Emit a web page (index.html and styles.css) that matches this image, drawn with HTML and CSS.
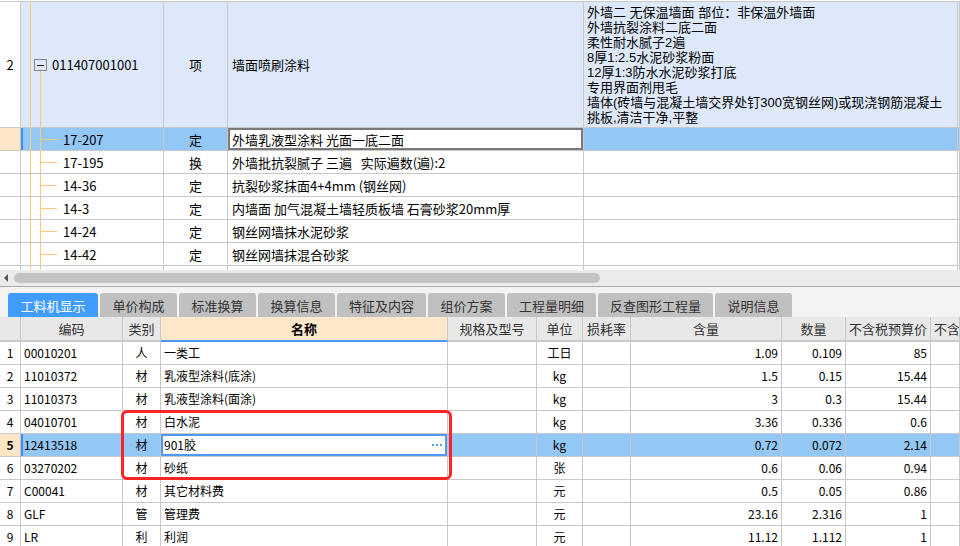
FILE: index.html
```html
<!DOCTYPE html>
<html lang="zh-CN">
<head>
<meta charset="utf-8">
<title>工料机显示</title>
<link rel="stylesheet" href="styles.css">
</head>
<body>
<div class="app">
  <div class="top">
    <div class="trow item">
      <div class="num">2</div>
      <div class="code root"><span class="minus"></span>011407001001</div>
      <div class="type">项</div>
      <div class="name">墙面喷刷涂料</div>
      <div class="desc">
        <div class="dl">外墙二 无保温墙面 部位：非保温外墙面</div>
        <div class="dl">外墙抗裂涂料二底二面</div>
        <div class="dl">柔性耐水腻子2遍</div>
        <div class="dl">8厚1:2.5水泥砂浆粉面</div>
        <div class="dl">12厚1:3防水水泥砂浆打底</div>
        <div class="dl">专用界面剂甩毛</div>
        <div class="dl">墙体(砖墙与混凝土墙交界处钉300宽钢丝网)或现浇钢筋混凝土</div>
        <div class="dl">挑板,清洁干净,平整</div>
      </div>
      <div class="end"></div>
    </div>
    <div class="trow sel">
      <div class="num"></div>
      <div class="code child">17-207</div>
      <div class="type">定</div>
      <div class="name">外墙乳液型涂料 光面一底二面</div>
      <div class="desc"></div>
      <div class="end"></div>
    </div>
    <div class="trow">
      <div class="num"></div>
      <div class="code child">17-195</div>
      <div class="type">换</div>
      <div class="name">外墙批抗裂腻子 三遍&nbsp;&nbsp;&nbsp;实际遍数(遍):2</div>
      <div class="desc"></div>
      <div class="end"></div>
    </div>
    <div class="trow">
      <div class="num"></div>
      <div class="code child">14-36</div>
      <div class="type">定</div>
      <div class="name">抗裂砂浆抹面4+4mm (钢丝网)</div>
      <div class="desc"></div>
      <div class="end"></div>
    </div>
    <div class="trow">
      <div class="num"></div>
      <div class="code child">14-3</div>
      <div class="type">定</div>
      <div class="name">内墙面 加气混凝土墙轻质板墙 石膏砂浆20mm厚</div>
      <div class="desc"></div>
      <div class="end"></div>
    </div>
    <div class="trow">
      <div class="num"></div>
      <div class="code child">14-24</div>
      <div class="type">定</div>
      <div class="name">钢丝网墙抹水泥砂浆</div>
      <div class="desc"></div>
      <div class="end"></div>
    </div>
    <div class="trow">
      <div class="num"></div>
      <div class="code child">14-42</div>
      <div class="type">定</div>
      <div class="name">钢丝网墙抹混合砂浆</div>
      <div class="desc"></div>
      <div class="end"></div>
    </div>
    <div class="trow">
      <div class="num"></div>
      <div class="code cont"></div>
      <div class="type"></div>
      <div class="name"></div>
      <div class="desc"></div>
      <div class="end"></div>
    </div>
  </div>

  <div class="hscroll"><span class="arrow"></span><span class="thumb"></span></div>

  <div class="tabs">
    <div class="tab active">工料机显示</div>
    <div class="tab">单价构成</div>
    <div class="tab">标准换算</div>
    <div class="tab">换算信息</div>
    <div class="tab">特征及内容</div>
    <div class="tab">组价方案</div>
    <div class="tab">工程量明细</div>
    <div class="tab">反查图形工程量</div>
    <div class="tab">说明信息</div>
  </div>

  <div class="bottom">
    <div class="brow head">
      <div></div>
      <div>编码</div>
      <div>类别</div>
      <div class="hname">名称</div>
      <div>规格及型号</div>
      <div>单位</div>
      <div>损耗率</div>
      <div>含量</div>
      <div>数量</div>
      <div>不含税预算价</div>
      <div class="clip">不含</div>
    </div>
    <div class="brow">
      <div class="bn">1</div><div class="bc">00010201</div><div class="bt">人</div><div class="bm">一类工</div><div></div><div class="bu">工日</div><div></div><div class="r">1.09</div><div class="r">0.109</div><div class="r">85</div><div></div>
    </div>
    <div class="brow">
      <div class="bn">2</div><div class="bc">11010372</div><div class="bt">材</div><div class="bm">乳液型涂料(底涂)</div><div></div><div class="bu">kg</div><div></div><div class="r">1.5</div><div class="r">0.15</div><div class="r">15.44</div><div></div>
    </div>
    <div class="brow">
      <div class="bn">3</div><div class="bc">11010373</div><div class="bt">材</div><div class="bm">乳液型涂料(面涂)</div><div></div><div class="bu">kg</div><div></div><div class="r">3</div><div class="r">0.3</div><div class="r">15.44</div><div></div>
    </div>
    <div class="brow">
      <div class="bn">4</div><div class="bc">04010701</div><div class="bt">材</div><div class="bm">白水泥</div><div></div><div class="bu">kg</div><div></div><div class="r">3.36</div><div class="r">0.336</div><div class="r">0.6</div><div></div>
    </div>
    <div class="brow bsel">
      <div class="bn">5</div><div class="bc">12413518</div><div class="bt">材</div><div class="bm edit">901胶<span class="more"><i></i><i></i><i></i></span></div><div></div><div class="bu">kg</div><div></div><div class="r">0.72</div><div class="r">0.072</div><div class="r">2.14</div><div></div>
    </div>
    <div class="brow">
      <div class="bn">6</div><div class="bc">03270202</div><div class="bt">材</div><div class="bm">砂纸</div><div></div><div class="bu">张</div><div></div><div class="r">0.6</div><div class="r">0.06</div><div class="r">0.94</div><div></div>
    </div>
    <div class="brow">
      <div class="bn">7</div><div class="bc">C00041</div><div class="bt">材</div><div class="bm">其它材料费</div><div></div><div class="bu">元</div><div></div><div class="r">0.5</div><div class="r">0.05</div><div class="r">0.86</div><div></div>
    </div>
    <div class="brow">
      <div class="bn">8</div><div class="bc">GLF</div><div class="bt">管</div><div class="bm">管理费</div><div></div><div class="bu">元</div><div></div><div class="r">23.16</div><div class="r">2.316</div><div class="r">1</div><div></div>
    </div>
    <div class="brow">
      <div class="bn">9</div><div class="bc">LR</div><div class="bt">利</div><div class="bm">利润</div><div></div><div class="bu">元</div><div></div><div class="r">11.12</div><div class="r">1.112</div><div class="r">1</div><div></div>
    </div>
    <div class="mark"></div>
  </div>
</div>
</body>
</html>
```

FILE: styles.css
```css
* { box-sizing: border-box; }
html, body { margin: 0; padding: 0; }
body {
  width: 960px;
  height: 546px;
  overflow: hidden;
  background: #fff;
  font-family: "Noto Sans CJK SC", "Liberation Sans", sans-serif;
  color: #000;
}
.app { width: 960px; height: 546px; overflow: hidden; }

/* ---------- top tree grid ---------- */
.top {
  height: 270px;
  overflow: hidden;
  padding-top: 1px;
  background: #fff;
}
.trow {
  display: grid;
  grid-template-columns: 21px 143px 64px 356px 374px 1fr;
  height: 23px;
  font-size: 13px;
}
.trow > div {
  border-right: 1px solid #c8c8c8;
  border-bottom: 1px solid #c8c8c8;
  display: flex;
  align-items: center;
  white-space: nowrap;
  overflow: hidden;
  line-height: 15px;
}
.trow .num { justify-content: center; }
.trow .type { justify-content: center; }
.trow .name { padding-left: 4px; }
.trow.item {
  height: 127px;
  border-top: 1px solid #c8c8c8;
}
.trow.item > div { background-color: #dde9fb; }
.trow.item > .num { background-color: #fff; }
.trow.item .desc {
  flex-direction: column;
  align-items: flex-start;
  padding: 3px 0 0 3px;
}
.dl {
  height: 15px;
  line-height: 15px;
  font-size: 13px;
  font-family: "Liberation Sans", "Noto Sans CJK SC", sans-serif;
}

.code { padding-left: 42px; }
.code.child, .code.cont {
  background-image:
    linear-gradient(#ffc878, #ffc878),
    linear-gradient(#ffc878, #ffc878),
    linear-gradient(#ffc878, #ffc878);
  background-repeat: no-repeat;
  background-position: 9px 0, 19px 0, 19px 50%;
  background-size: 1px 100%, 1px 100%, 17px 1px;
}
.code.cont { background-size: 1px 100%, 1px 100%, 0 0; }
.trow.item .code.root {
  padding-left: 13px;
  background-image:
    linear-gradient(#ffc878, #ffc878),
    linear-gradient(#ffc878, #ffc878);
  background-repeat: no-repeat;
  background-position: 9px 0, 19px 100%;
  background-size: 1px 100%, 1px 50%;
}
.minus {
  position: relative;
  width: 13px;
  height: 12px;
  margin-right: 5px;
  border: 1px solid #8a8a8a;
  background: #dde9fb;
}
.minus::after {
  content: "";
  position: absolute;
  left: 2px;
  right: 2px;
  top: 5px;
  height: 1px;
  background: #222;
}

.trow.sel > div { background-color: #93c7f5; }
.trow.sel > .num { background-color: #fde7c9; }
.trow.sel > .code { box-shadow: inset 2px 0 0 #3d8ef0; }
.trow.sel > .name {
  background-color: #fff;
  box-shadow: inset 0 0 0 2px #7a7a7a;
}

/* ---------- horizontal scrollbar ---------- */
.hscroll {
  height: 17px;
  background: #ebebeb;
  border-bottom: 1px solid #a9a9a9;
  display: flex;
  align-items: center;
  padding-left: 4px;
}
.arrow {
  width: 0;
  height: 0;
  border-top: 4px solid transparent;
  border-bottom: 4px solid transparent;
  border-right: 4px solid #555;
}
.thumb {
  margin-left: 6px;
  width: 586px;
  height: 10px;
  border-radius: 5px;
  background: #c4c4c4;
}

/* ---------- tabs ---------- */
.tabs {
  height: 30px;
  background: #f3f3f3;
  display: flex;
  align-items: flex-end;
  gap: 2px;
  padding-left: 8px;
}
.tab {
  height: 24px;
  padding: 0 12px;
  min-width: 77px;
  display: flex;
  align-items: center;
  justify-content: center;
  background: #c0c0c0;
  color: #333;
  font-size: 13px;
  border-radius: 3px 3px 0 0;
  white-space: nowrap;
}
.tab.active { background: #409cfe; color: #fff; width: 90px; }

/* ---------- bottom grid ---------- */
.bottom { position: relative; }
.brow {
  display: grid;
  grid-template-columns: 21px 102px 38px 287px 89px 46px 48px 151px 64px 85px 1fr;
  height: 23px;
  font-size: 12px;
}
.brow > div {
  border-right: 1px solid #c8c8c8;
  border-bottom: 1px solid #c8c8c8;
  display: flex;
  align-items: center;
  white-space: nowrap;
  overflow: hidden;
  line-height: 14px;
}
.brow.head { height: 25px; font-size: 13px; color: #333; }
.brow.head > div {
  background: #e8e8e8;
  justify-content: center;
  border-bottom: 2px solid #c8c8c8;
}
.brow.head > .hname {
  background: #fee8c9;
  color: #000;
  font-weight: bold;
  border-bottom-color: #4a9af5;
}
.brow.head > .clip { justify-content: flex-start; padding-left: 3px; }
.bn, .bt, .bu { justify-content: center; }
.bc { padding-left: 3px; }
.bm { padding-left: 3px; }
.r { justify-content: flex-end; padding-right: 3px; }

.bsel > div { background-color: #93c7f5; }
.bsel > .bn { background-color: #fde6c6; font-weight: bold; }
.bsel > .bc { box-shadow: inset 2px 0 0 #3d8ef0; }
.bsel > .edit {
  background-color: #fff;
  box-shadow: inset 0 0 0 2px #4a9af5;
  padding-right: 5px;
}
.more {
  margin-left: auto;
  display: flex;
  gap: 2px;
  align-items: center;
}
.more i {
  display: block;
  width: 2px;
  height: 2px;
  background: #5b9bd8;
}

.mark {
  position: absolute;
  left: 121px;
  top: 93px;
  width: 331px;
  height: 70px;
  border: 3px solid #ff2424;
  border-radius: 6px;
  pointer-events: none;
}
```
